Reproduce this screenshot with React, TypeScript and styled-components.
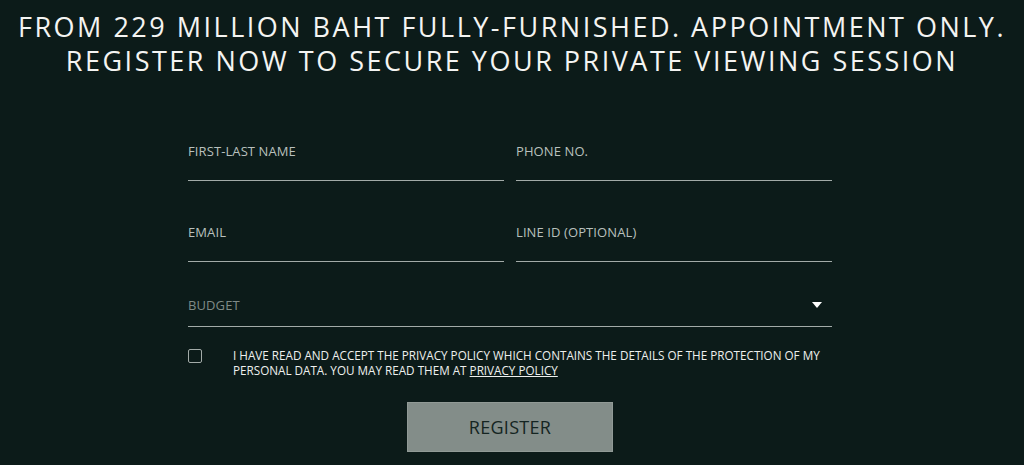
import styled, { createGlobalStyle } from 'styled-components';

const GlobalStyle = createGlobalStyle`
  html, body {
    margin: 0;
    padding: 0;
    background: #0c1b19;
  }
  body {
    font-family: "Open Sans", "Liberation Sans", sans-serif;
    color: #ffffff;
  }
`;

const Page = styled.div`
  width: 1024px;
  height: 465px;
  overflow: hidden;
  background: #0c1b19;
`;

const Title = styled.h1`
  margin: 0;
  padding-top: 10px;
  text-align: center;
  font-size: 27px;
  font-weight: 400;
  line-height: 34px;
  letter-spacing: 2.5px;
  color: #f4f4f2;
`;

const Form = styled.form`
  width: 644px;
  margin: 0 auto;
  padding: 62px 4px 0 0;
  display: flex;
  flex-direction: column;
`;

const Row = styled.div<{ last?: boolean }>`
  display: grid;
  grid-template-columns: 1fr 1fr;
  column-gap: 12px;
  margin-bottom: ${({ last }) => (last ? '32px' : '40px')};
`;

const Field = styled.div<{ compact?: boolean }>`
  display: flex;
  align-items: center;
  justify-content: space-between;
  padding: 3px 0 ${({ compact }) => (compact ? '13px' : '21px')};
  border-bottom: 1px solid #a3aba8;
`;

const Label = styled.span<{ muted?: boolean }>`
  font-size: 13px;
  line-height: 16px;
  letter-spacing: 0.1px;
  color: ${({ muted }) => (muted ? '#7f8a87' : '#b9c0bd')};
`;

const Caret = styled.span`
  width: 0;
  height: 0;
  margin-right: 10px;
  border-left: 5px solid transparent;
  border-right: 5px solid transparent;
  border-top: 6px solid #ffffff;
`;

const Consent = styled.div`
  display: flex;
  align-items: flex-start;
  margin-top: 21px;
`;

const Box = styled.span`
  flex: none;
  width: 12px;
  height: 12px;
  margin-top: 1px;
  border: 1.5px solid #a3aba8;
  border-radius: 2px;
`;

const ConsentText = styled.p`
  margin: 0 0 0 31px;
  font-size: 11.7px;
  line-height: 15px;
  letter-spacing: 0;
  color: #eef0ee;
`;

const PolicyLink = styled.a`
  color: inherit;
  text-decoration: underline;
`;

const Button = styled.button`
  align-self: center;
  width: 206px;
  height: 50px;
  margin-top: 24px;
  background: #838d89;
  border: 1px solid #919a96;
  font-family: inherit;
  font-size: 18px;
  letter-spacing: 0.3px;
  color: #152522;
`;

export default function App() {
  return (
    <Page>
      <GlobalStyle />
      <Title>
        FROM 229 MILLION BAHT FULLY-FURNISHED. APPOINTMENT ONLY.
        <br />
        REGISTER NOW TO SECURE YOUR PRIVATE VIEWING SESSION
      </Title>
      <Form>
        <Row>
          <Field><Label>FIRST-LAST NAME</Label></Field>
          <Field><Label>PHONE NO.</Label></Field>
        </Row>
        <Row last>
          <Field><Label>EMAIL</Label></Field>
          <Field><Label>LINE ID (OPTIONAL)</Label></Field>
        </Row>
        <Field compact>
          <Label muted>BUDGET</Label>
          <Caret />
        </Field>
        <Consent>
          <Box />
          <ConsentText>
            I HAVE READ AND ACCEPT THE PRIVACY POLICY WHICH CONTAINS THE DETAILS OF THE PROTECTION OF MY
            <br />
            PERSONAL DATA. YOU MAY READ THEM AT <PolicyLink>PRIVACY POLICY</PolicyLink>
          </ConsentText>
        </Consent>
        <Button type="button">REGISTER</Button>
      </Form>
    </Page>
  );
}
